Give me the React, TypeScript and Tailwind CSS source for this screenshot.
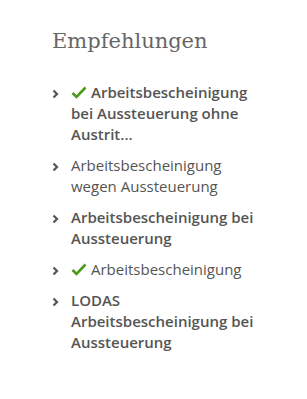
import React from 'react';

type Item = { label: string; bold: boolean; done: boolean };

const items: Item[] = [
  { label: 'Arbeitsbescheinigung bei Aussteuerung ohne Austrit...', bold: true, done: true },
  { label: 'Arbeitsbescheinigung wegen Aussteuerung', bold: false, done: false },
  { label: 'Arbeitsbescheinigung bei Aussteuerung', bold: true, done: false },
  { label: 'Arbeitsbescheinigung', bold: false, done: true },
  { label: 'LODAS Arbeitsbescheinigung bei Aussteuerung', bold: true, done: false },
];

function Chevron() {
  return (
    <svg width="7" height="10" viewBox="0 0 7 10" className="shrink-0 mt-[7px]">
      <path d="M1.5 1.5 L5 5 L1.5 8.5" fill="none" stroke="#555" strokeWidth="2.2" />
    </svg>
  );
}

function Check() {
  return (
    <svg width="16" height="13" viewBox="0 0 16 13" className="inline-block mr-[4px] -mt-[3px] align-middle">
      <path d="M1.5 7 L5.5 11 L14.5 1.5" fill="none" stroke="#4c9a1c" strokeWidth="2.6" />
    </svg>
  );
}

export default function App() {
  return (
    <div className="w-[307px] h-[399px] bg-white pt-[27px] pl-[52px] text-[#555]">
      <h2 className="text-[21px] leading-[28px] text-[#666] font-['DejaVu_Serif',serif]">
        Empfehlungen
      </h2>
      <ul className="mt-[27px] flex flex-col gap-[10px] w-[212px] font-['Open_Sans',sans-serif] text-[15px] leading-[21px]">
        {items.map((it, i) => (
          <li key={i} className="flex gap-[12px]">
            <Chevron />
            <span className={it.bold ? 'font-semibold' : 'font-normal'}>
              {it.done && <Check />}
              {it.label}
            </span>
          </li>
        ))}
      </ul>
    </div>
  );
}
